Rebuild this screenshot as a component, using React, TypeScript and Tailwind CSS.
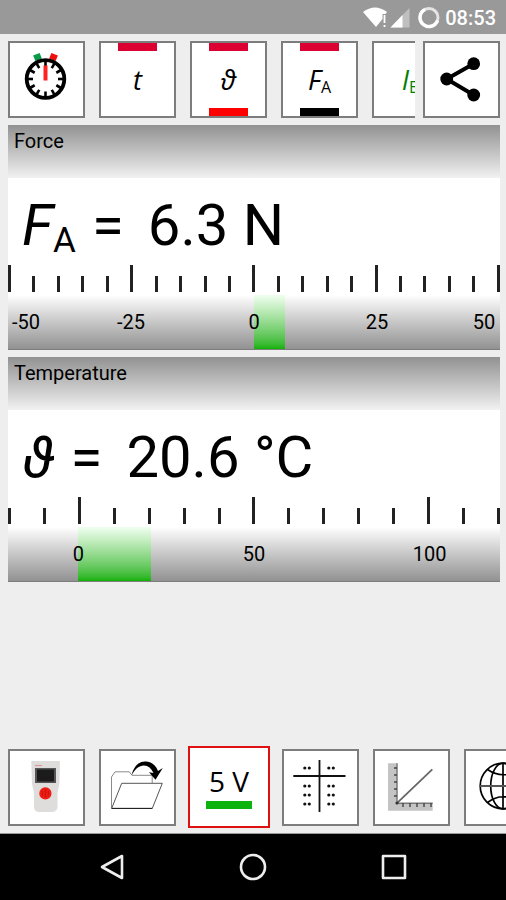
import React from "react";

type Mark = { value: number; label: string };

type MeterProps = {
  title: string;
  symbol: React.ReactNode;
  reading: string;
  value: number;
  min: number;
  max: number;
  step: number;
  marks: Mark[];
};

const force: Mark[] = [
  { value: -50, label: "-50" },
  { value: -25, label: "-25" },
  { value: 0, label: "0" },
  { value: 25, label: "25" },
  { value: 50, label: "50" },
];

const temperature: Mark[] = [
  { value: 0, label: "0" },
  { value: 50, label: "50" },
  { value: 100, label: "100" },
];

function Tile({
  label,
  active,
  children,
}: {
  label: string;
  active?: boolean;
  children: React.ReactNode;
}) {
  return (
    <button
      type="button"
      aria-label={label}
      className={
        active
          ? "-mx-[2px] flex h-[82px] w-[82px] shrink-0 flex-col items-center justify-center border-2 border-[#dd1111] bg-white"
          : "flex h-[77px] w-[77px] shrink-0 flex-col items-center border-2 border-[#7d7d7d] bg-white"
      }
    >
      {children}
    </button>
  );
}

function Quantity({
  top,
  bottom,
  children,
}: {
  top: string;
  bottom: string;
  children: React.ReactNode;
}) {
  return (
    <>
      <span className={`h-2 w-[39px] ${top}`} />
      <span className="flex flex-1 items-center font-['Open_Sans','Noto_Sans',sans-serif] text-[27px] leading-none italic">
        <span>{children}</span>
      </span>
      <span className={`h-2 w-[39px] ${bottom}`} />
    </>
  );
}

function Meter({ title, symbol, reading, value, min, max, step, marks }: MeterProps) {
  const percent = (v: number) => ((v - min) / (max - min)) * 100;
  const ticks = Array.from({ length: (max - min) / step + 1 }, (_, i) => min + i * step);
  return (
    <section className="bg-white">
      <h2 className="h-[53px] bg-linear-to-b from-[#929292] to-[#f2f2f2] px-1.5 pt-1 text-[20px] leading-6">
        {title}
      </h2>
      <div className="flex h-[87px] items-center pt-1.5 pl-3.5 text-[58px] leading-none whitespace-nowrap">
        <div className="flex items-baseline gap-4">
          <span>{symbol}</span>
          <span>=</span>
          <span className="ml-2">{reading}</span>
        </div>
      </div>
      {/* ticks */}
      <div className="flex h-[30px] items-end justify-between pb-[3px]">
        {ticks.map((t) => (
          <span
            key={t}
            className={
              marks.some((m) => m.value === t)
                ? "h-[27px] w-[3px] bg-[#222222]"
                : "h-4 w-[3px] bg-[#222222]"
            }
          />
        ))}
      </div>
      {/* scale */}
      <div className="relative h-[55px] border-b border-[#7d7d7d] bg-linear-to-b from-white to-[#929292] text-[20px]">
        <div
          className="absolute inset-y-0 bg-linear-to-b from-[#f0fff0] to-[#0db300]"
          style={{ left: `${percent(0)}%`, width: `${percent(value) - percent(0)}%` }}
        />
        {marks.map((m) => (
          <span
            key={m.label}
            className="absolute top-1/2 -translate-x-1/2 -translate-y-1/2"
            style={{ left: `clamp(18px, ${percent(m.value)}%, calc(100% - 16px))` }}
          >
            {m.label}
          </span>
        ))}
      </div>
    </section>
  );
}

function Stopwatch() {
  return (
    <svg viewBox="0 0 73 73" className="h-full w-full">
      <rect x="24" y="11" width="7" height="6" fill="#0a9a4a" transform="rotate(-22 27.5 14)" />
      <rect x="40" y="11" width="7" height="6" fill="#f01010" transform="rotate(22 43.5 14)" />
      <circle cx="35.5" cy="36" r="18.8" fill="#fff" stroke="#000" strokeWidth="3.8" />
      {[0, 30, 60, 90, 120, 150, 180, 210, 240, 270, 300, 330].map((a) => (
        <path
          key={a}
          d="M35.5 18V23.5"
          stroke="#000"
          strokeWidth="2.6"
          transform={`rotate(${a} 35.5 36)`}
        />
      ))}
      <path d="M35.5 22.5V37.5" stroke="#f22" strokeWidth="4" />
    </svg>
  );
}

function Share() {
  return (
    <svg viewBox="0 0 73 73" className="h-full w-full">
      <path d="M48.7 20.7L21.7 36L48.7 52" fill="none" stroke="#000" strokeWidth="4" />
      <circle cx="48.7" cy="20.7" r="6.4" />
      <circle cx="21.7" cy="36" r="6.4" />
      <circle cx="48.7" cy="52" r="6.4" />
    </svg>
  );
}

function Device() {
  return (
    <svg viewBox="0 0 73 73" className="h-full w-full">
      <path
        d="M22 10H49Q50 10 50 12L49.3 33L47.5 42V57Q46 61 42 61H29Q25 61 24 57V42L22 33L21.3 12Q21 10 22 10Z"
        fill="#dedddb"
      />
      <path d="M25 14.5H32" stroke="#d99" strokeWidth="1.2" />
      <rect x="25" y="17" width="21" height="15" fill="#555" />
      <rect x="27" y="18.5" width="17" height="12" fill="#1b1b1b" />
      <circle cx="35.4" cy="42.4" r="6.1" fill="#ee1c12" />
      <path d="M35.4 38.5V46.3M32.5 40V44.8M38.3 40V44.8" stroke="#b80f0f" strokeWidth="0.7" />
    </svg>
  );
}

function OpenFile() {
  return (
    <svg viewBox="0 0 73 73" className="h-full w-full">
      <path
        d="M10.5 57.3V26L14 20.8H28.3L31 24.3H51.2V32.3"
        fill="none"
        stroke="#8a8a8a"
        strokeWidth="1"
      />
      <path d="M10.7 57.3L20.7 32.3H61.3L51.3 57.3Z" fill="#fff" stroke="#555" strokeWidth="1" />
      <path d="M10.7 57.5H51.3" stroke="#222" strokeWidth="1.2" />
      <path
        d="M30.5 24.5C33 14 39 10 45 10.5C51 11 55 14.5 57 20L61.8 17L54.5 28.8L48 21.2L52.5 22C50.5 17.5 47 14.5 43 14.5C38 14.5 34 18 30.5 24.5Z"
        fill="#000"
      />
    </svg>
  );
}

function TableIcon() {
  return (
    <svg viewBox="0 0 73 73" className="h-full w-full">
      <path d="M35.5 9V61M9.3 25H61.5" stroke="#111" strokeWidth="1.8" />
      {[17, 35, 44, 53].map((y) => (
        <g key={y} fill="#111">
          <circle cx="20.8" cy={y} r="1.6" />
          <circle cx="25.3" cy={y} r="1.6" />
          <circle cx="44.8" cy={y} r="1.6" />
          <circle cx="49.3" cy={y} r="1.6" />
        </g>
      ))}
    </svg>
  );
}

function Graph() {
  return (
    <svg viewBox="0 0 73 73" className="h-full w-full">
      <path d="M13 12.3H22.3V52H57.7V59.7H13Z" fill="#c4c4c4" />
      <path d="M22 12.3V52.3H57.7" fill="none" stroke="#777" strokeWidth="1.4" />
      <path
        d="M19 17H22M19 24H22M19 31H22M19 38H22M19 45H22M28 52V56M35 52V56M42 52V56M49 52V56M56 52V56"
        stroke="#444"
        strokeWidth="1.4"
      />
      <path d="M21.7 52.3L57.3 18.3" stroke="#666" strokeWidth="1.8" />
      <circle cx="22" cy="52" r="1.6" fill="#333" />
    </svg>
  );
}

function Globe() {
  return (
    <svg viewBox="0 0 73 73" className="h-full w-full" fill="none" stroke="#000" strokeWidth="1.7">
      <circle cx="37" cy="35" r="22.8" />
      <ellipse cx="37" cy="35" rx="12.3" ry="22.8" />
      <path d="M37 12V58M21.5 18.5Q37 29 52.5 18.5M21.5 51.5Q37 40 52.5 51.5" />
      <path d="M14 35H60" stroke="#555" strokeWidth="2" />
    </svg>
  );
}

export default function App() {
  return (
    <div className="flex min-h-screen flex-col bg-[#eeeeee] font-['Roboto',sans-serif] text-black">
      {/* status bar */}
      <header className="flex h-[34px] items-center justify-end bg-[#999999] pr-[10px]">
        <svg viewBox="0 0 78 34" className="h-[34px] w-[78px]">
          <path d="M0 12Q12 3 24 12L22.5 14H19.5V19L13 27Z" fill="#fff" />
          <path d="M21.5 15V23M21.5 25V27" stroke="#fff" strokeWidth="1.8" />
          <path d="M46.5 8V27.5H27.5Z" fill="#bfbfbf" />
          <path d="M39.5 15V27.5H27.5Z" fill="#fff" />
          <circle cx="66" cy="17.5" r="9" fill="none" stroke="#e4e4e4" strokeWidth="3" />
          <path d="M62 9.5A9 9 0 1 0 74.5 20.500" fill="none" stroke="#fff" strokeWidth="3.4" />
        </svg>
        <time className="ml-1 pt-0.5 text-[20px] font-medium text-white">08:53</time>
      </header>

      <main className="flex flex-1 flex-col gap-[7px] pt-[7px] pr-1.5 pl-2">
        <div className="flex gap-2">
          <div className="flex flex-1 gap-3.5 overflow-hidden">
            <Tile label="Stopwatch">
              <Stopwatch />
            </Tile>
            <Tile label="Time">
              <Quantity top="bg-[#dc0032]" bottom="bg-white">
                t
              </Quantity>
            </Tile>
            <Tile label="Temperature">
              <Quantity top="bg-[#dc0032]" bottom="bg-[#ff0000]">
                ϑ
              </Quantity>
            </Tile>
            <Tile label="Force">
              <Quantity top="bg-[#dc0032]" bottom="bg-black">
                F<sub className="-bottom-[3px] text-[16px] not-italic">A</sub>
              </Quantity>
            </Tile>
            <Tile label="Current">
              <Quantity top="bg-white" bottom="bg-white">
                <span className="text-[#008000]">
                  I<sub className="-bottom-[3px] text-[16px] not-italic">B</sub>
                </span>
              </Quantity>
            </Tile>
          </div>
          <Tile label="Share">
            <Share />
          </Tile>
        </div>

        <Meter
          title="Force"
          symbol={
            <>
              <i>F</i>
              <sub className="-bottom-[7px] text-[35px]">A</sub>
            </>
          }
          reading="6.3 N"
          value={6.3}
          min={-50}
          max={50}
          step={5}
          marks={force}
        />
        <Meter
          title="Temperature"
          symbol={<i>ϑ</i>}
          reading="20.6 °C"
          value={20.6}
          min={-20}
          max={120}
          step={10}
          marks={temperature}
        />
      </main>

      {/* tools */}
      <div className="flex items-center gap-3.5 overflow-hidden border-b border-[#999999] pt-4 pb-[5px] pl-2">
        <Tile label="Device">
          <Device />
        </Tile>
        <Tile label="Open">
          <OpenFile />
        </Tile>
        <Tile label="5 V" active>
          <span className="font-['Open_Sans',sans-serif] text-[28px] leading-8">5 V</span>
          <span className="mt-1 h-2 w-[46px] bg-[#0db30d]" />
        </Tile>
        <Tile label="Table">
          <TableIcon />
        </Tile>
        <Tile label="Graph">
          <Graph />
        </Tile>
        <Tile label="Web">
          <Globe />
        </Tile>
      </div>

      <nav className="bg-black">
        <div className="mx-auto grid h-[66px] w-5/6 grid-cols-3 place-items-center">
          <button type="button" aria-label="Back">
            <svg viewBox="0 0 32 32" className="h-8 w-8" fill="none" stroke="#eee" strokeWidth="2.6" strokeLinejoin="round">
              <path d="M6 16L26 5V27Z" />
            </svg>
          </button>
          <button type="button" aria-label="Home">
            <svg viewBox="0 0 32 32" className="h-8 w-8" fill="none" stroke="#eee" strokeWidth="2.6">
              <circle cx="16" cy="16" r="12" />
            </svg>
          </button>
          <button type="button" aria-label="Recent apps">
            <svg viewBox="0 0 32 32" className="h-8 w-8" fill="none" stroke="#eee" strokeWidth="2.6" strokeLinejoin="round">
              <rect x="5" y="5" width="22" height="22" />
            </svg>
          </button>
        </div>
      </nav>
    </div>
  );
}
